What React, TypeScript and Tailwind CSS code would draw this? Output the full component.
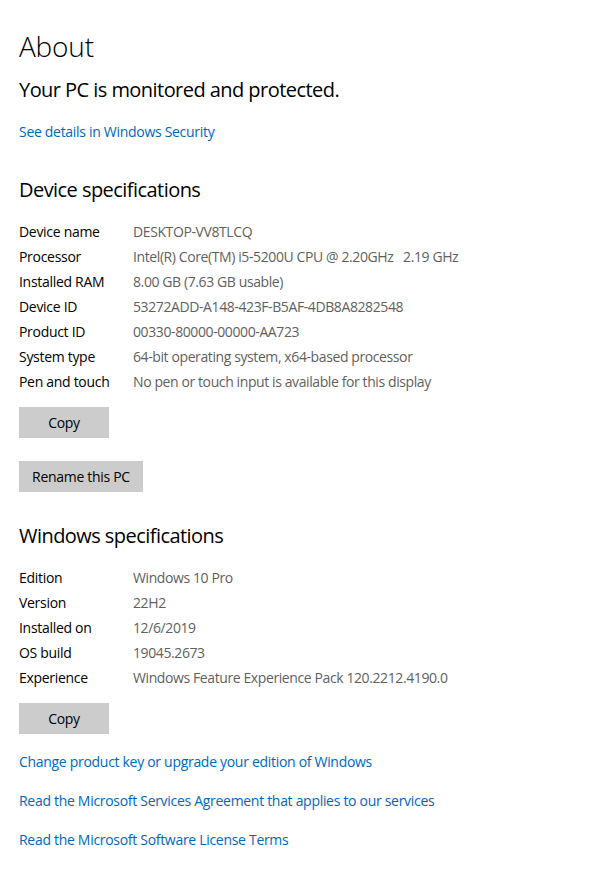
const deviceSpecs: [string, string][] = [
  ['Device name', 'DESKTOP-VV8TLCQ'],
  ['Processor', 'Intel(R) Core(TM) i5-5200U CPU @ 2.20GHz   2.19 GHz'],
  ['Installed RAM', '8.00 GB (7.63 GB usable)'],
  ['Device ID', '53272ADD-A148-423F-B5AF-4DB8A8282548'],
  ['Product ID', '00330-80000-00000-AA723'],
  ['System type', '64-bit operating system, x64-based processor'],
  ['Pen and touch', 'No pen or touch input is available for this display'],
]

const windowsSpecs: [string, string][] = [
  ['Edition', 'Windows 10 Pro'],
  ['Version', '22H2'],
  ['Installed on', '12/6/2019'],
  ['OS build', '19045.2673'],
  ['Experience', 'Windows Feature Experience Pack 120.2212.4190.0'],
]

function SpecTable({ rows }: { rows: [string, string][] }) {
  return (
    <div className="mt-[15px] flex flex-col">
      {rows.map(([label, value]) => (
        <div key={label} className="flex h-[25px] items-center text-[14px]">
          <div className="w-[114px] shrink-0 text-black">{label}</div>
          <div className="whitespace-pre tracking-[-0.4px] text-[#5f5f5f]">{value}</div>
        </div>
      ))}
    </div>
  )
}

function GrayButton({ children, className }: { children: React.ReactNode; className: string }) {
  return (
    <button className={`flex h-[31px] items-center justify-center bg-[#cccccc] text-[14px] text-black ${className}`}>
      {children}
    </button>
  )
}

export default function App() {
  return (
    <div className="min-h-[885px] bg-white px-[19px] pt-[28px] font-['Open_Sans','Noto_Sans',sans-serif] tracking-[-0.3px]">
      <h1 className="text-[28px] font-light leading-[36px] tracking-[-0.2px] text-black">About</h1>
      <p className="mt-3 text-[20px] leading-[28px] tracking-[-0.55px] text-black">Your PC is monitored and protected.</p>
      <a className="mt-[18px] block text-[14px] leading-[20px] text-[#0067c0]">See details in Windows Security</a>

      <h2 className="mt-[34px] text-[20px] leading-[28px] tracking-[-0.55px] text-black">Device specifications</h2>
      <SpecTable rows={deviceSpecs} />
      <GrayButton className="mt-[13px] w-[90px]">Copy</GrayButton>
      <GrayButton className="mt-[23px] w-[124px]">Rename this PC</GrayButton>

      <h2 className="mt-[30px] text-[20px] leading-[28px] tracking-[-0.55px] text-black">Windows specifications</h2>
      <SpecTable rows={windowsSpecs} />
      <GrayButton className="mt-[13px] w-[90px]">Copy</GrayButton>

      <div className="mt-[18px] flex flex-col gap-[19px] text-[14px] leading-[20px] text-[#0067c0]">
        <a>Change product key or upgrade your edition of Windows</a>
        <a>Read the Microsoft Services Agreement that applies to our services</a>
        <a>Read the Microsoft Software License Terms</a>
      </div>
    </div>
  )
}
